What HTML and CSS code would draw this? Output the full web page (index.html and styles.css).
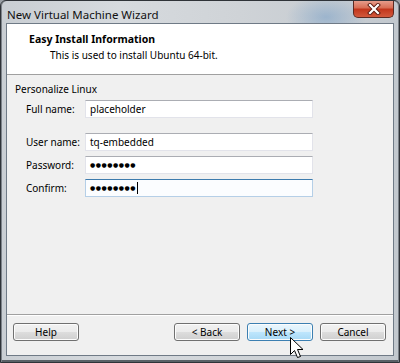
FILE: index.html
```html
<!DOCTYPE html>
<html lang="en">
<head>
    <meta charset="UTF-8">
    <title>New Virtual Machine Wizard</title>
    <link rel="stylesheet" href="styles.css">
</head>
<body>

<div class="window">
    <div class="titlebar">
        <span class="title">New Virtual Machine Wizard</span>
        <div class="close-btn">
            <svg width="16" height="12" viewBox="0 0 16 12">
                <path d="M4 2 L12 10 M12 2 L4 10" stroke="#5a1a10" stroke-width="4" stroke-linecap="square"/>
                <path d="M4 2 L12 10 M12 2 L4 10" stroke="#ffffff" stroke-width="2.2" stroke-linecap="square"/>
            </svg>
        </div>
    </div>

    <div class="client">
        <div class="header">
            <div class="header-title">Easy Install Information</div>
            <div class="header-sub">This is used to install Ubuntu 64-bit.</div>
        </div>

        <div class="content">
            <div class="group-label">Personalize Linux</div>

            <div class="field-row first">
                <label>Full name:</label>
                <div class="textbox">placeholder</div>
            </div>
            <div class="field-row spaced">
                <label>User name:</label>
                <div class="textbox">tq-embedded</div>
            </div>
            <div class="field-row">
                <label>Password:</label>
                <div class="textbox dots">&#9679;&#9679;&#9679;&#9679;&#9679;&#9679;&#9679;&#9679;</div>
            </div>
            <div class="field-row">
                <label>Confirm:</label>
                <div class="textbox dots focused">&#9679;&#9679;&#9679;&#9679;&#9679;&#9679;&#9679;&#9679;<span class="caret"></span></div>
            </div>
        </div>

        <div class="footer">
            <button class="btn">Help</button>
            <div class="footer-right">
                <button class="btn">&lt; Back</button>
                <button class="btn hover">Next &gt;</button>
                <button class="btn">Cancel</button>
            </div>
        </div>
    </div>

    <!-- mouse pointer over the Next button -->
    <svg class="cursor" width="14" height="22" viewBox="0 0 14 22">
        <path d="M0.5 0.5 L0.5 17.5 L4.5 13.5 L7.5 20.5 L10.5 19.5 L7.5 12.5 L13 12.5 Z" fill="#ffffff" stroke="#000000" stroke-width="1"/>
    </svg>
</div>

</body>
</html>
```

FILE: styles.css
```css
body {
    margin: 0;
    background: #9aa0a6;
    font-family: "Noto Sans", "Open Sans", sans-serif;
}

.window {
    position: relative;
    width: 400px;
    height: 363px;
    box-sizing: border-box;
    border: 1px solid #2f3338;
    border-radius: 6px 6px 0 0;
    box-shadow: inset 1px 0 0 #7d838a, inset -1px 0 0 #7d838a, inset 0 -2px 0 #5a6066;
    background:
        radial-gradient(ellipse 40px 22px at 325px 16px, rgba(120, 160, 200, 0.55), rgba(120, 160, 200, 0) 100%),
        linear-gradient(90deg, #c9ced3 0%, #d6dade 30%, #cfd3d7 60%, #c2c8ce 100%);
    overflow: hidden;
}

.titlebar {
    height: 22px;
    display: flex;
    align-items: center;
    justify-content: space-between;
    padding-left: 6px;
}

.title {
    font-size: 11.5px;
    color: #111;
    margin-top: 4px;
}

.close-btn {
    width: 41px;
    height: 18px;
    margin-right: 5px;
    align-self: flex-start;
    margin-top: -1px;
    box-sizing: border-box;
    border: 1px solid #5b2a22;
    border-top: none;
    border-radius: 0 0 5px 5px;
    background: linear-gradient(#e8a393 0%, #d86f56 45%, #c2361c 55%, #d2593c 100%);
    display: flex;
    align-items: center;
    justify-content: center;
}

.client {
    margin: 0 5px;
    height: 333px;
    box-sizing: border-box;
    border: 1px solid #6f7a86;
    background: #f0f0f0;
    display: flex;
    flex-direction: column;
    font-size: 10px;
    color: #000;
}

.header {
    height: 51px;
    box-sizing: border-box;
    background: #ffffff;
    border-bottom: 1px solid #a0a0a0;
    padding: 7px 0 0 22px;
}

.header-title {
    font-weight: bold;
    font-size: 10.5px;
    line-height: 16px;
}

.header-sub {
    line-height: 16px;
    padding-left: 21px;
}

.content {
    flex: 1;
    padding: 6px 0 0 8px;
}

.group-label {
    line-height: 16px;
}

.field-row {
    display: flex;
    align-items: center;
    margin-top: 5px;
}

.field-row.first {
    margin-top: 3px;
}

.field-row.spaced {
    margin-top: 15px;
}

.field-row label {
    width: 59px;
    padding-left: 11px;
}

.textbox {
    width: 228px;
    height: 18px;
    box-sizing: border-box;
    background: #ffffff;
    border: 1px solid #e2e3ea;
    border-top-color: #abadb3;
    padding-left: 4px;
    line-height: 16px;
    display: flex;
    align-items: center;
}

.textbox.dots {
    font-family: "DejaVu Sans", sans-serif;
    font-size: 6px;
    letter-spacing: 0.5px;
}

.textbox.focused {
    border-color: #b5cfe7;
    border-top-color: #3d7bad;
    background: #fbfdff;
}

.caret {
    width: 1px;
    height: 12px;
    background: #000;
    margin-left: 1px;
}

.footer {
    height: 32px;
    border-top: 1px solid #a0a0a0;
    box-shadow: inset 0 1px 0 #ffffff;
    display: flex;
    justify-content: space-between;
    align-items: flex-start;
    padding: 8px 7px 0 6px;
}

.footer-right {
    display: flex;
    gap: 7px;
}

.btn {
    width: 66px;
    height: 18px;
    padding: 0;
    font-family: "Noto Sans", "Open Sans", sans-serif;
    font-size: 10px;
    color: #000;
    border: 1px solid #707070;
    border-radius: 3px;
    background: linear-gradient(#f2f2f2 0%, #ebebeb 50%, #dddddd 51%, #cfcfcf 100%);
    box-shadow: inset 0 0 0 1px #fcfcfc;
}

.btn.hover {
    border-color: #3c7fb1;
    background: linear-gradient(#eaf6fd 0%, #d9f0fc 50%, #bee6fd 51%, #a7d9f5 100%);
}

.cursor {
    position: absolute;
    left: 289px;
    top: 336px;
}
```
